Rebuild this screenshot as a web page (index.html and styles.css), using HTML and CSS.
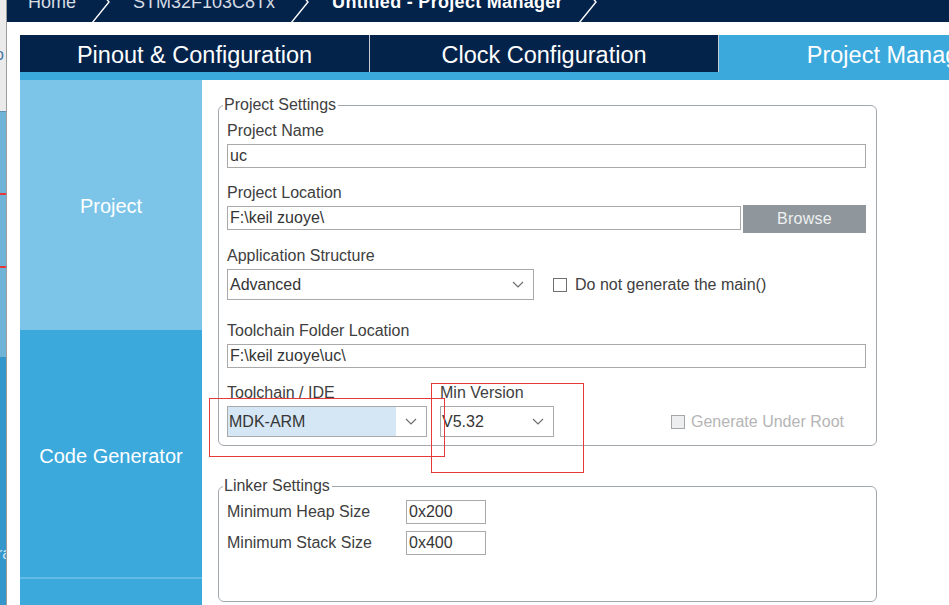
FILE: index.html
```html
<!DOCTYPE html>
<html lang="en">
<head>
    <meta charset="UTF-8">
    <title>Untitled - Project Manager</title>
    <link rel="stylesheet" href="styles.css">
</head>
<body>
    <div class="screen">
        <div class="backdrop">
            <div class="bd-top"><span class="bd-glyph">o</span></div>
            <div class="bd-mid">
                <div class="bd-red first"></div>
                <div class="bd-red second"></div>
            </div>
            <div class="bd-low"><span class="bd-glyph light">ra</span></div>
        </div>

        <div class="window">
            <div class="crumbs">
                <span class="crumb">Home</span>
                <svg class="crumb-sep" width="22" height="22" viewBox="0 0 22 22"><polyline points="2,23 19,2 13,-5" /></svg>
                <span class="crumb">STM32F103C8Tx</span>
                <svg class="crumb-sep" width="22" height="22" viewBox="0 0 22 22"><polyline points="2,23 19,2 13,-5" /></svg>
                <span class="crumb current">Untitled - Project Manager</span>
                <svg class="crumb-sep" width="22" height="22" viewBox="0 0 22 22"><polyline points="2,23 19,2 13,-5" /></svg>
            </div>

            <div class="main">
                <div class="tabs">
                    <div class="tab">Pinout &amp; Configuration</div>
                    <div class="tab">Clock Configuration</div>
                    <div class="tab active">Project Manager</div>
                </div>
                <div class="band"></div>

                <div class="workspace">
                    <div class="sidebar">
                        <div class="side-item selected">Project</div>
                        <div class="side-item">Code Generator</div>
                        <div class="side-item rest"></div>
                    </div>

                    <div class="content">
                        <fieldset class="group">
                            <legend>Project Settings</legend>

                            <div class="label first">Project Name</div>
                            <input class="field" type="text" value="uc">

                            <div class="label">Project Location</div>
                            <div class="row">
                                <input class="field grow" type="text" value="F:\keil zuoye\">
                                <button class="browse">Browse</button>
                            </div>

                            <div class="label after-row">Application Structure</div>
                            <div class="row center">
                                <div class="select wide">
                                    <span class="select-value">Advanced</span>
                                    <span class="select-arrow"><svg width="12" height="7" viewBox="0 0 12 7"><polyline points="1,1 6,6 11,1" /></svg></span>
                                </div>
                                <span class="check"></span>
                                <span class="check-text">Do not generate the main()</span>
                            </div>

                            <div class="label after-select">Toolchain Folder Location</div>
                            <input class="field" type="text" value="F:\keil zuoye\uc\">

                            <div class="row bottom">
                                <div class="col">
                                    <div class="label">Toolchain / IDE</div>
                                    <div class="select ide">
                                        <span class="select-value picked">MDK-ARM</span>
                                        <span class="select-arrow"><svg width="12" height="7" viewBox="0 0 12 7"><polyline points="1,1 6,6 11,1" /></svg></span>
                                    </div>
                                </div>
                                <div class="col version">
                                    <div class="label">Min Version</div>
                                    <div class="select small">
                                        <span class="select-value tight">V5.32</span>
                                        <span class="select-arrow"><svg width="12" height="7" viewBox="0 0 12 7"><polyline points="1,1 6,6 11,1" /></svg></span>
                                    </div>
                                </div>
                                <div class="root-option">
                                    <span class="check disabled"></span>
                                    <span class="check-text disabled">Generate Under Root</span>
                                </div>
                            </div>
                        </fieldset>

                        <fieldset class="group linker">
                            <legend>Linker Settings</legend>
                            <div class="row size first">
                                <span class="size-label">Minimum Heap Size</span>
                                <input class="field size-field" type="text" value="0x200">
                            </div>
                            <div class="row size">
                                <span class="size-label">Minimum Stack Size</span>
                                <input class="field size-field" type="text" value="0x400">
                            </div>
                        </fieldset>
                    </div>
                </div>
            </div>
        </div>
    </div>

    <!-- red marks drawn over the screenshot -->
    <div class="mark mark-ide"></div>
    <div class="mark mark-version"></div>
</body>
</html>
```

FILE: styles.css
```css
body {
    margin: 0;
    font-family: "Liberation Sans", Arial, sans-serif;
    color: #404040;
    background-color: #ffffff;
}

.screen {
    display: flex;
    width: 949px;
    height: 605px;
    overflow: hidden;
}

/* window behind, only a sliver is visible */
.backdrop {
    width: 6px;
    flex-shrink: 0;
    display: flex;
    flex-direction: column;
    overflow: hidden;
}

.bd-top {
    height: 112px;
    background-color: #ebebeb;
    border-bottom: 1px solid #5f8fae;
    padding-top: 46px;
    box-sizing: border-box;
}

.bd-glyph {
    display: block;
    margin-left: -5px;
    font-size: 16px;
    line-height: 18px;
    color: #4a78a6;
}

.bd-glyph.light {
    margin-left: -3px;
    color: #cfe6f3;
}

.bd-mid {
    height: 245px;
    background-color: #6fb3d6;
    padding-top: 81px;
    box-sizing: border-box;
}

.bd-red {
    height: 2px;
    background-color: #e8383a;
}

.bd-red.second {
    margin-top: 71px;
}

.bd-low {
    flex: 1;
    background-color: #3497cb;
    padding-top: 188px;
}

.window {
    flex: 1;
    border-left: 1px solid #9c9c9c;
    background-color: #ffffff;
    overflow: hidden;
}

/* breadcrumb bar */
.crumbs {
    height: 22px;
    background-color: #03234b;
    display: flex;
    align-items: flex-start;
    padding-left: 21px;
    overflow: hidden;
}

.crumb {
    font-size: 18px;
    line-height: 22px;
    margin-top: -9px;
    color: #d6dce4;
    white-space: nowrap;
}

.crumb.current {
    color: #ffffff;
    font-weight: bold;
    letter-spacing: 0.3px;
}

.crumb-sep {
    flex-shrink: 0;
    margin: 0 21px 0 14px;
    overflow: visible;
}

.crumb-sep polyline {
    fill: none;
    stroke: #ffffff;
    stroke-width: 1.4;
}

.main {
    padding: 13px 0 0 13px;
}

.tabs {
    display: flex;
    height: 37px;
    width: 1100px;
}

.tab {
    width: 349px;
    flex-shrink: 0;
    box-sizing: border-box;
    background-color: #03234b;
    color: #ffffff;
    font-size: 23.5px;
    display: flex;
    align-items: center;
    justify-content: center;
    padding-top: 3px;
}

.tab + .tab {
    border-left: 1px solid #c3cad4;
}

.tab.active {
    background-color: #3ca9dd;
}

.band {
    height: 8px;
    background-color: #3ca9dd;
}

.workspace {
    display: flex;
    height: 525px;
}

.sidebar {
    width: 182px;
    flex-shrink: 0;
    display: flex;
    flex-direction: column;
    background-color: #3ca9dd;
}

.side-item {
    height: 247px;
    box-sizing: border-box;
    display: flex;
    align-items: center;
    justify-content: center;
    color: #ffffff;
    font-size: 20px;
    background-color: #3ca9dd;
    padding-top: 5px;
}

.side-item.selected {
    height: 250px;
    background-color: #7cc5e9;
    padding-top: 2px;
}

.side-item.rest {
    flex: 1;
    border-top: 2px solid #62bbe6;
}

.content {
    flex: 1;
    padding-top: 16px;
}

/* settings groups */
.group {
    width: 659px;
    box-sizing: border-box;
    margin: 0 0 0 16px;
    padding: 0 10px 8px 8px;
    border: 1px solid #a3a8ad;
    border-radius: 6px;
}

.group legend {
    font-size: 16px;
    line-height: 18px;
    padding: 0 2px 0 1px;
    margin-left: -4px;
    color: #404040;
}

.group.linker {
    margin-top: 31px;
    padding-bottom: 46px;
}

.label {
    font-size: 16px;
    line-height: 18px;
    margin-top: 16px;
    margin-bottom: 4px;
    white-space: nowrap;
}

.label.first {
    margin-top: 8px;
}

.label.after-row {
    margin-top: 14px;
}

.label.after-select {
    margin-top: 22px;
}

.field {
    display: block;
    width: 100%;
    height: 24px;
    box-sizing: border-box;
    margin: 0;
    padding: 0 2px;
    border: 1px solid #a9a9a9;
    border-radius: 0;
    font-family: "Liberation Sans", Arial, sans-serif;
    font-size: 16px;
    color: #353535;
    background-color: #ffffff;
    outline: none;
}

.row {
    display: flex;
    align-items: flex-start;
}

.row.center {
    align-items: center;
}

.field.grow {
    flex: 1;
    width: auto;
}

.browse {
    width: 123px;
    height: 28px;
    margin: -1px 0 0 2px;
    border: none;
    background-color: #8f979c;
    color: #eef0f1;
    font-family: "Liberation Sans", Arial, sans-serif;
    font-size: 16px;
    letter-spacing: 0.3px;
}

.select {
    height: 31px;
    box-sizing: border-box;
    border: 1px solid #a9a9a9;
    display: flex;
    align-items: stretch;
    background-color: #ffffff;
}

.select.wide {
    width: 307px;
}

.select.ide {
    width: 200px;
}

.select.small {
    width: 114px;
}

.select-value {
    flex: 1;
    display: flex;
    align-items: center;
    padding-left: 2px;
    font-size: 16px;
    color: #353535;
}

.select-value.picked {
    background-color: #d5e6f4;
    padding-left: 1px;
}

.select-value.tight {
    padding-left: 1px;
}

.select-arrow {
    width: 30px;
    display: flex;
    align-items: center;
    justify-content: center;
}

.select-arrow polyline {
    fill: none;
    stroke: #6e6e6e;
    stroke-width: 1.2;
}

.check {
    width: 14px;
    height: 14px;
    box-sizing: border-box;
    border: 1px solid #6f6f6f;
    background-color: #ffffff;
    margin-left: 19px;
    flex-shrink: 0;
}

.check-text {
    font-size: 16px;
    margin-left: 8px;
    white-space: nowrap;
}

.check.disabled {
    margin-left: 0;
    border-color: #a5a8ab;
    background-color: #eceef0;
}

.check-text.disabled {
    margin-left: 6px;
    color: #b5b5b5;
}

.row.bottom {
    align-items: flex-end;
}

.col.version {
    margin-left: 13px;
}

.root-option {
    display: flex;
    align-items: center;
    height: 31px;
    margin-left: 117px;
}

.row.size {
    align-items: center;
    margin-top: 7px;
}

.row.size.first {
    margin-top: 5px;
}

.size-label {
    width: 179px;
    font-size: 16px;
    white-space: nowrap;
}

.field.size-field {
    width: 80px;
}

.mark {
    position: absolute;
    border: 1px solid #e53a3c;
}

.mark-ide {
    left: 209px;
    top: 398px;
    width: 234px;
    height: 57px;
}

.mark-version {
    left: 431px;
    top: 383px;
    width: 151px;
    height: 88px;
}
```
